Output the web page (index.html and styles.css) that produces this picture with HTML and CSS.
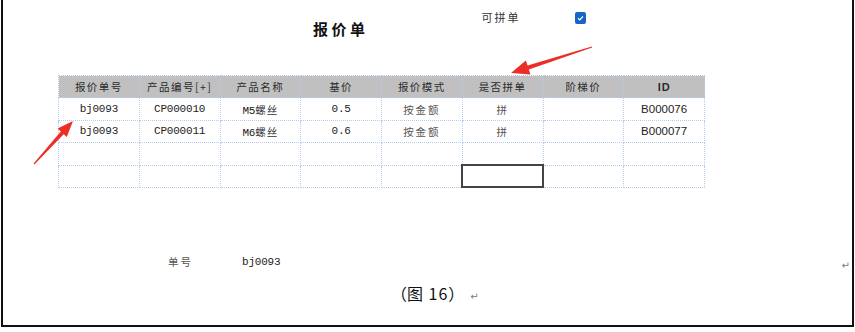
FILE: index.html
```html
<!DOCTYPE html>
<html lang="zh">
<head>
<meta charset="utf-8">
<link rel="stylesheet" href="styles.css">
</head>
<body>
<div class="page">
  <div class="top">
    <h1 class="title">报价单</h1>
    <span class="flag-label">可拼单</span>
    <span class="checkbox"><svg width="11" height="12" viewBox="0 0 11 12"><path d="M3 6.3 L4.8 8 L8 4.3" fill="none" stroke="#fff" stroke-width="1.2"/></svg></span>
  </div>
  <table class="grid">
    <thead>
      <tr><th>报价单号</th><th>产品编号[+]</th><th>产品名称</th><th>基价</th><th>报价模式</th><th>是否拼单</th><th>阶梯价</th><th class="id">ID</th></tr>
    </thead>
    <tbody>
      <tr><td class="mono">bj0093</td><td class="mono">CP000010</td><td class="mono">M5<span class="cjk">螺丝</span></td><td class="mono">0.5</td><td class="grey">按金额</td><td class="grey">拼</td><td></td><td class="sans">B000076</td></tr>
      <tr><td class="mono">bj0093</td><td class="mono">CP000011</td><td class="mono">M6<span class="cjk">螺丝</span></td><td class="mono">0.6</td><td class="grey">按金额</td><td class="grey">拼</td><td></td><td class="sans">B000077</td></tr>
      <tr><td></td><td></td><td></td><td></td><td></td><td></td><td></td><td></td></tr>
      <tr><td></td><td></td><td></td><td></td><td></td><td class="selected"></td><td></td><td></td></tr>
    </tbody>
  </table>
  <div class="info">
    <span class="info-label">单号</span>
    <span class="info-value">bj0093</span>
    <span class="mark right-mark">↵</span>
  </div>
  <p class="caption"><span class="paren">（</span>图 16<span class="paren">）</span><span class="mark">↵</span></p>
  <svg class="arrows" width="855" height="332" viewBox="0 0 855 332">
    <polygon fill="#ec2f26" points="592.2,47.6 591.8,46.4 527.6,65.4 525.8,60.6 511,73 530.5,74.4 528.8,69.6"/>
    <polygon fill="#ec2f26" points="34.4,164.4 33.6,163.6 60.8,131.5 57.6,128.6 73,121 66.8,137 63.7,134.2"/>
  </svg>
</div>
</body>
</html>
```
FILE: styles.css
```css
* { box-sizing: border-box; }
html, body { margin: 0; padding: 0; background: #fff; }
.page {
  position: relative;
  margin-left: 1px;
  width: 853px;
  height: 327px;
  border-left: 2px solid #111;
  border-right: 2px solid #111;
  border-bottom: 2px solid #111;
  font-family: "Noto Sans CJK SC", sans-serif;
  color: #222;
  overflow: hidden;
}
.top {
  display: flex;
  align-items: flex-start;
  height: 75px;
}
.title {
  margin: 19px 0 0 310px;
  font-size: 15px;
  font-weight: bold;
  letter-spacing: 3.5px;
  line-height: 20px;
  color: #111;
}
.flag-label {
  margin: 9px 0 0 113px;
  font-size: 11px;
  letter-spacing: 2px;
  line-height: 16px;
  color: #333;
}
.checkbox {
  margin: 12px 0 0 54px;
  width: 11px;
  height: 12px;
  border-radius: 2px;
  background: #1766c6;
  display: flex;
}
.grid {
  margin-left: 55px;
  border-collapse: collapse;
  table-layout: fixed;
  width: 646px;
}
.grid th, .grid td {
  width: 80.75px;
  height: 22.4px;
  border: 1px dotted #b3cbec;
  text-align: center;
  padding: 0;
  font-weight: normal;
}
.grid th {
  background: #c0c0c0;
  font-size: 10.5px;
  letter-spacing: 1.5px;
  color: #2a2a2a;
}
.grid th.id { font-family: "Liberation Sans", sans-serif; font-weight: bold; letter-spacing: 1px; font-size: 11px; }
.grid td { font-size: 11px; color: #222; }
.mono { font-family: "Liberation Mono", "Noto Sans CJK SC", monospace; font-size: 11px !important; letter-spacing: -0.2px; }
.cjk { font-family: "Noto Sans CJK SC", sans-serif; font-size: 10.5px; letter-spacing: 1px; color: #333; }
.grey { color: #555 !important; font-size: 10.5px !important; letter-spacing: 2px; }
.sans { font-family: "Liberation Sans", sans-serif; font-size: 11.5px !important; }
.grid td.selected { outline: 2px solid #444; outline-offset: -1px; }
.info {
  display: flex;
  align-items: center;
  margin-top: 66px;
  padding-left: 165px;
  height: 16px;
}
.info-label { font-size: 10.5px; letter-spacing: 2px; color: #555; }
.info-value { margin-left: 49px; font-family: "Liberation Mono", monospace; font-size: 11px; letter-spacing: -0.2px; color: #222; }
.mark { font-family: "DejaVu Sans", sans-serif; font-size: 10px; color: #777; }
.right-mark { margin-left: auto; margin-right: 2px; margin-top: 8px; }
.caption {
  margin: 12px 0 0 388px;
  font-size: 16px;
  color: #111;
  line-height: 22px;
  letter-spacing: 1px;
}
.caption .paren { display: inline-block; width: 16px; text-align: center; }
.caption .mark { margin-left: 6px; }
.arrows { position: absolute; left: -3px; top: 0; pointer-events: none; }
```
